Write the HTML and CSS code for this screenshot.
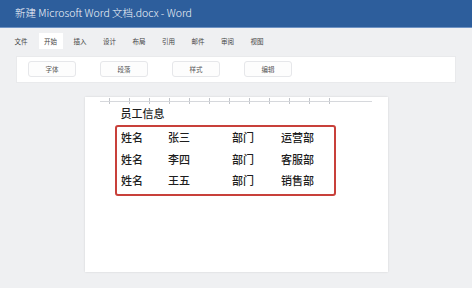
FILE: index.html
```html
<!DOCTYPE html>
<html lang="zh-CN">
<head>
<meta charset="utf-8">
<title>Word</title>
<link rel="stylesheet" href="styles.css">
</head>
<body>
<div class="titlebar">新建 Microsoft Word 文档.docx - Word</div>
<div class="menubar">
  <span class="tab">文件</span>
  <span class="tab active">开始</span>
  <span class="tab">插入</span>
  <span class="tab">设计</span>
  <span class="tab">布局</span>
  <span class="tab">引用</span>
  <span class="tab">邮件</span>
  <span class="tab">审阅</span>
  <span class="tab">视图</span>
</div>
<div class="ribbon">
  <span class="group">字体</span>
  <span class="group">段落</span>
  <span class="group">样式</span>
  <span class="group">编辑</span>
</div>
<div class="page">
  <div class="ruler"></div>
  <div class="heading">员工信息</div>
  <div class="table">
    <span>姓名</span><span>张三</span><span>部门</span><span>运营部</span>
    <span>姓名</span><span>李四</span><span>部门</span><span>客服部</span>
    <span>姓名</span><span>王五</span><span>部门</span><span>销售部</span>
  </div>
</div>
</body>
</html>
```
FILE: styles.css
```css
* { box-sizing: border-box; }
html, body { margin: 0; padding: 0; }
body {
  width: 472px;
  height: 288px;
  overflow: hidden;
  background: #eff0f2;
  font-family: "Noto Sans CJK SC", "Noto Sans", sans-serif;
}
.titlebar {
  height: 28px;
  background: #2d5e9c;
  border-bottom: 1px solid #6f93c4;
  color: #f4f7fb;
  font-size: 10.5px;
  line-height: 25px;
  padding-left: 15px;
  font-weight: 300;
}
.menubar {
  height: 22px;
  display: flex;
  gap: 5.5px;
  padding: 5px 0 0 9px;
  background: #eff0f2;
}
.tab {
  width: 24px;
  height: 16px;
  line-height: 16px;
  text-align: center;
  font-size: 6.5px;
  color: #444;
}
.tab.active { background: #ffffff; }
.ribbon {
  margin: 6px 16px 0;
  height: 27px;
  background: #ffffff;
  border: 1px solid #e9eaec;
  display: flex;
  gap: 24px;
  padding: 4px 0 0 11px;
}
.group {
  width: 48px;
  height: 16px;
  line-height: 15px;
  text-align: center;
  font-size: 6.5px;
  color: #555;
  background: #fdfdfd;
  border: 1px solid #e6e7ea;
  border-radius: 3px;
}
.page {
  margin: 14px 0 0 85px;
  width: 303px;
  height: 175px;
  background: #ffffff;
  box-shadow: 0 0 2px rgba(0,0,0,0.12);
}
.ruler {
  margin-left: 15px;
  width: 272px;
  height: 8px;
  background:
    linear-gradient(#d6d8dc, #d6d8dc) 0 4px / 100% 1px no-repeat,
    repeating-linear-gradient(90deg, transparent 0 9px, #c2c5ca 9px 10px, transparent 10px 20px) 0 1px / 240px 6px no-repeat;
}
.heading {
  margin: 1px 0 0 35.5px;
  font-size: 11px;
  line-height: 14px;
  font-weight: 500;
  color: #1e1e1e;
}
.table {
  margin: 5px 0 0 30px;
  width: 221px;
  height: 71px;
  border: 2px solid #c8403a;
  border-radius: 3px;
  display: grid;
  grid-template-columns: 47px 64px 49px auto;
  grid-auto-rows: 21.5px;
  padding: 0 0 0 4px;
  font-size: 11px;
  line-height: 21.5px;
  font-weight: 500;
  color: #1e1e1e;
}
```
